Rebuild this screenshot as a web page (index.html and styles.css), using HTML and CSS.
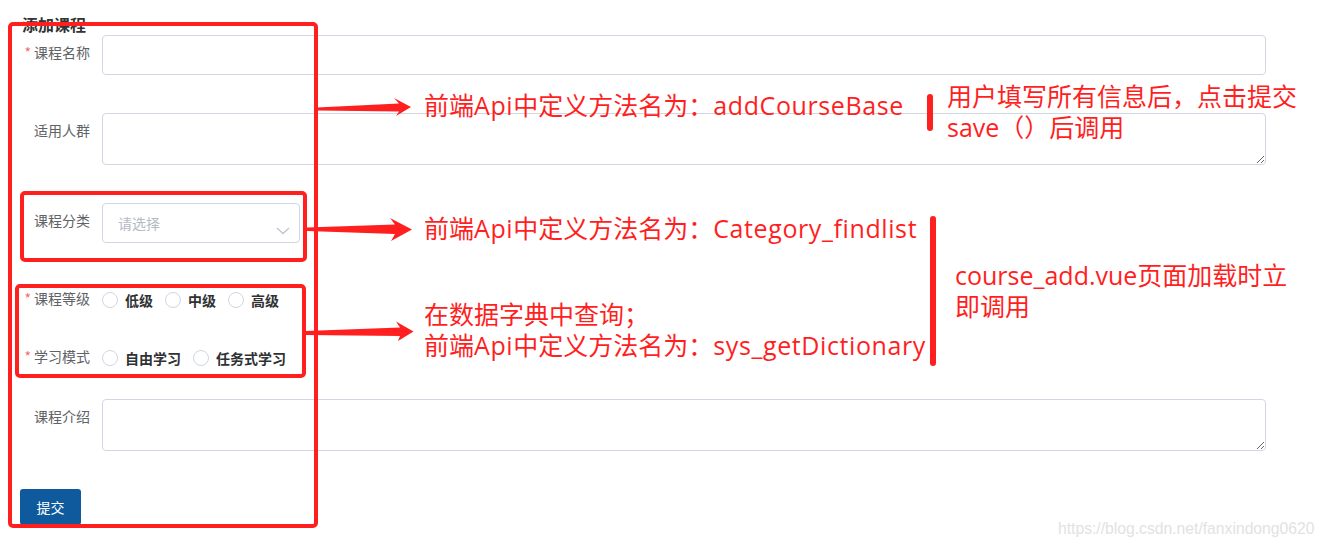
FILE: index.html
```html
<!DOCTYPE html>
<html lang="zh-CN">
<head>
    <meta charset="UTF-8">
    <meta name="viewport" content="width=device-width, initial-scale=1.0">
    <title>添加课程</title>
    <link rel="stylesheet" href="styles.css">
</head>
<body>
    <div class="page">
        <h3 class="title">添加课程</h3>
        <form class="course-form">
            <div class="form-item">
                <label class="form-label required">课程名称</label>
                <div class="form-control"><input class="text-input" type="text"></div>
            </div>
            <div class="form-item">
                <label class="form-label">适用人群</label>
                <div class="form-control"><textarea class="text-area"></textarea></div>
            </div>
            <div class="form-item">
                <label class="form-label">课程分类</label>
                <div class="form-control">
                    <div class="select">
                        <span class="placeholder">请选择</span>
                        <svg class="chevron" width="14" height="8" viewBox="0 0 14 8"><polyline points="1,1 7,6.5 13,1" fill="none" stroke="#c0c4cc" stroke-width="1.3"/></svg>
                    </div>
                </div>
            </div>
            <div class="form-item radio-item grade">
                <label class="form-label required">课程等级</label>
                <div class="radio-group">
                    <span class="radio"><span class="radio-circle"></span><span class="radio-text">低级</span></span>
                    <span class="radio"><span class="radio-circle"></span><span class="radio-text">中级</span></span>
                    <span class="radio"><span class="radio-circle"></span><span class="radio-text">高级</span></span>
                </div>
            </div>
            <div class="form-item radio-item mode">
                <label class="form-label required">学习模式</label>
                <div class="radio-group">
                    <span class="radio"><span class="radio-circle"></span><span class="radio-text">自由学习</span></span>
                    <span class="radio"><span class="radio-circle"></span><span class="radio-text">任务式学习</span></span>
                </div>
            </div>
            <div class="form-item">
                <label class="form-label">课程介绍</label>
                <div class="form-control"><textarea class="text-area"></textarea></div>
            </div>
            <button type="button" class="submit-btn">提交</button>
        </form>
    </div>

    <!-- annotations drawn on top of the screenshot -->
    <div class="annotations">
        <div class="mark mark-form"></div>
        <div class="mark mark-category"></div>
        <div class="mark mark-radios"></div>

        <svg class="arrows" width="1326" height="549" viewBox="0 0 1326 549">
            <polygon points="317,107.5 399,103.5 394,98 411,107 396,116 399,111.5 317,110.5" fill="#ff1f1f"/>
            <polygon points="307,227.5 395,224.5 390,218 412,229.5 391,241 395,234 307,231" fill="#ff1f1f"/>
            <polygon points="306,331 400,327.5 396,321.5 413.5,331.5 398,341 400,336 306,335" fill="#ff1f1f"/>
        </svg>

        <div class="bar bar-save"></div>
        <div class="bar bar-load"></div>

        <div class="note note-add">前端<span class="latin">Api</span>中定义方法名为：<span class="latin">addCourseBase</span></div>
        <div class="note note-save">用户填写所有信息后，点击提交<br>save（）后调用</div>
        <div class="note note-category">前端<span class="latin">Api</span>中定义方法名为：<span class="latin">Category_findlist</span></div>
        <div class="note note-dict">在数据字典中查询；<br>前端<span class="latin">Api</span>中定义方法名为：<span class="latin">sys_getDictionary</span></div>
        <div class="note note-load">course_add.vue页面加载时立<br>即调用</div>

        <div class="watermark">https://blog.csdn.net/fanxindong0620</div>
    </div>
</body>
</html>
```

FILE: styles.css
```css
body {
    margin: 0;
    background-color: #fff;
    font-family: "Noto Sans CJK SC", "Noto Sans", sans-serif;
}
.page {
    padding: 14px 60px 0 20px;
}
.title {
    margin: 0 0 1px 2px;
    font-size: 16px;
    line-height: 20px;
    font-weight: bold;
    color: #333;
}
.form-item {
    display: flex;
    align-items: flex-start;
    margin-bottom: 38px;
}
.form-label {
    width: 82px;
    flex-shrink: 0;
    box-sizing: border-box;
    padding-right: 12px;
    text-align: right;
    font-size: 14px;
    line-height: 35px;
    color: #606266;
}
.form-label.required::before {
    content: "*";
    color: #f56c6c;
    margin-right: 3px;
}
.form-control {
    flex: 1;
}
.text-input,
.text-area {
    display: block;
    width: 100%;
    box-sizing: border-box;
    border: 1px solid #d0d7e2;
    border-radius: 4px;
    background: #fff;
    font-family: inherit;
    font-size: 14px;
    padding: 0 15px;
    margin: 0;
}
.text-input {
    height: 40px;
}
.text-area {
    height: 52px;
    padding: 5px 15px;
    resize: vertical;
}
.select {
    width: 198px;
    height: 40px;
    box-sizing: border-box;
    border: 1px solid #d0d7e2;
    border-radius: 4px;
    display: flex;
    justify-content: space-between;
    padding: 0 9px 0 15px;
}
.placeholder {
    align-self: center;
    font-size: 14px;
    color: #b4b9c3;
}
.chevron {
    align-self: flex-end;
    margin-bottom: 7px;
}
.radio-item.grade {
    margin-bottom: 23px;
}
.radio-item.mode {
    margin-bottom: 25px;
}
.radio-group {
    display: flex;
    align-items: center;
    height: 35px;
    padding-top: 2px;
    box-sizing: border-box;
}
.radio {
    display: flex;
    align-items: center;
    margin-right: 12px;
}
.radio-circle {
    width: 16px;
    height: 16px;
    box-sizing: border-box;
    border: 1px solid #d0d7e2;
    border-radius: 50%;
    margin-right: 7px;
}
.radio-text {
    font-size: 14px;
    font-weight: bold;
    color: #303133;
}
.submit-btn {
    display: block;
    width: 61px;
    height: 36px;
    border: none;
    border-radius: 3px;
    background-color: #0e5a9c;
    color: #fff;
    font-family: inherit;
    font-size: 14px;
    padding: 0;
}

/* annotation layer */
.annotations {
    position: absolute;
    top: 0;
    left: 0;
    width: 1326px;
    height: 549px;
    pointer-events: none;
}
.mark {
    position: absolute;
    box-sizing: border-box;
    border: 4px solid #ff1f1f;
    border-radius: 5px;
}
.mark-form {
    left: 8px;
    top: 22px;
    width: 310px;
    height: 506px;
}
.mark-category {
    left: 20px;
    top: 191px;
    width: 287px;
    height: 71px;
}
.mark-radios {
    left: 15px;
    top: 284px;
    width: 291px;
    height: 94px;
}
.arrows {
    position: absolute;
    top: 0;
    left: 0;
}
.bar {
    position: absolute;
    width: 6px;
    border-radius: 3px;
    background-color: #ff1f1f;
}
.bar-save {
    left: 927px;
    top: 94px;
    height: 37px;
}
.bar-load {
    left: 930px;
    top: 216px;
    height: 150px;
}
.note {
    position: absolute;
    font-family: "Open Sans", "Noto Sans CJK SC", sans-serif;
    font-size: 25px;
    line-height: 31px;
    color: #ff1f1f;
    white-space: nowrap;
}
.note .latin {
    letter-spacing: 0.6px;
}
.note-add {
    left: 424px;
    top: 90px;
}
.note-save {
    left: 947px;
    top: 81px;
}
.note-category {
    left: 424px;
    top: 213px;
}
.note-dict {
    left: 424px;
    top: 299px;
}
.note-load {
    left: 955px;
    top: 260px;
}
.watermark {
    position: absolute;
    left: 1058px;
    top: 520px;
    font-family: "Liberation Sans", Arial, sans-serif;
    font-size: 15.7px;
    color: #e2e2e2;
}
```
